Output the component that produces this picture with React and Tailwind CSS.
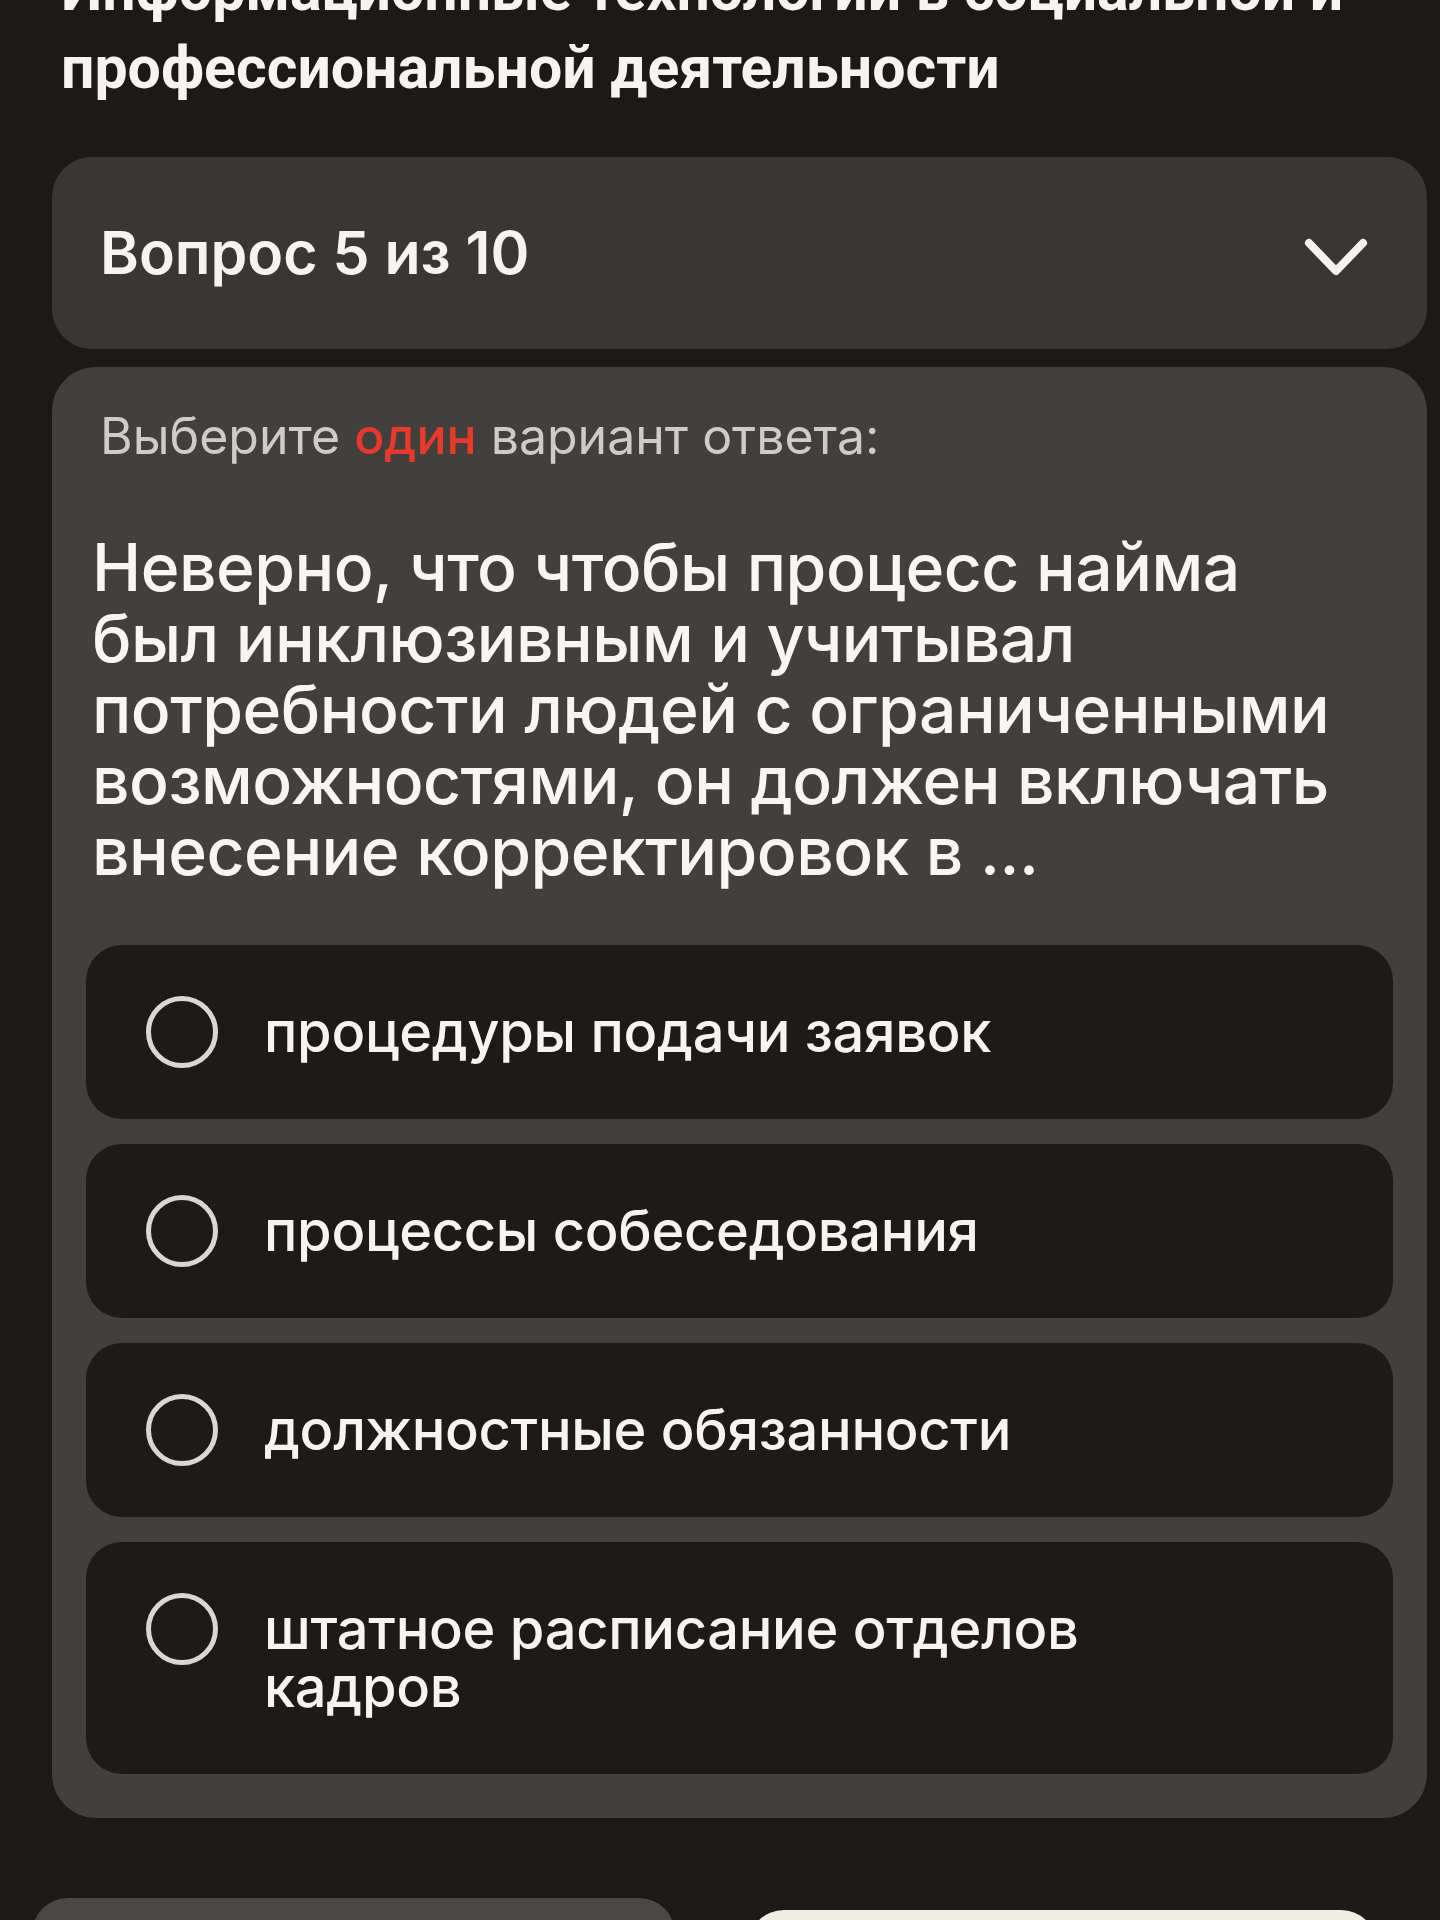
import React from "react";

const options = [
  ["процедуры подачи заявок"],
  ["процессы собеседования"],
  ["должностные обязанности"],
  ["штатное расписание отделов", "кадров"],
];

function Chevron() {
  return (
    <svg width="66" height="42" viewBox="0 0 66 42" fill="none">
      <path d="M6 6 L33 34 L60 6" stroke="#f4f2ee" strokeWidth="8" strokeLinecap="round" strokeLinejoin="round" />
    </svg>
  );
}

export default function App() {
  return (
    <div className="w-[1440px] h-[1920px] overflow-hidden bg-[#1b1a18] font-['Inter','Noto_Sans',sans-serif]">
      <div className="pl-[52px] pr-[13px]">
        <h1 className="-mt-[49px] pl-[9px] font-['Roboto','Inter',sans-serif] text-[59px] leading-[78px] font-bold text-[#f6f4f0]">
          Информационные технологии в социальной и
          <br />
          профессиональной деятельности
        </h1>

        <div className="mt-[50px] h-[192px] rounded-[40px] bg-[#393734] flex items-center justify-between pl-[48px] pr-[58px]">
          <span className="text-[59px] font-semibold text-[#f6f4f0]">Вопрос 5 из 10</span>
          <div className="mt-[10px]">
            <Chevron />
          </div>
        </div>

        <div className="mt-[18px] rounded-[44px] bg-[#42403d] pt-[40px] pb-[44px] px-[34px]">
          <p className="pl-[14px] text-[50px] leading-[58px] text-[#cfccc7]">
            Выберите <span className="text-[#e8392d] font-medium">один</span> вариант ответа:
          </p>
          <p className="mt-[67px] pl-[6px] text-[66px] leading-[71px] font-medium tracking-[-0.5px] text-[#f8f6f2]">
            Неверно, что чтобы процесс найма
            <br />
            был инклюзивным и учитывал
            <br />
            потребности людей с ограниченными
            <br />
            возможностями, он должен включать
            <br />
            внесение корректировок в ...
          </p>

          <div className="mt-[58px] flex flex-col gap-[25px]">
            {options.map((lines, i) => (
              <div
                key={i}
                className="rounded-[36px] bg-[#1c1b19] flex items-start gap-[46px] pl-[60px] pr-[40px] py-[58px]"
              >
                <div className="h-[58px] w-[72px] shrink-0 flex items-center">
                  <div className="w-[72px] h-[72px] shrink-0 rounded-full border-[5px] border-[#d9d7d3]" />
                </div>
                <div className="text-[56px] leading-[58px] font-medium tracking-[-0.3px] text-[#f6f4f0]">
                  {lines.map((l, j) => (
                    <div key={j}>{l}</div>
                  ))}
                </div>
              </div>
            ))}
          </div>
        </div>
      </div>

      <div className="mt-[80px] pl-[32px] flex items-start gap-[73px]">
        <div className="w-[643px] h-[100px] rounded-[36px] bg-[#4a4845]" />
        <div className="mt-[12px] w-[629px] h-[100px] rounded-[36px] bg-[#efebe5]" />
      </div>
    </div>
  );
}
